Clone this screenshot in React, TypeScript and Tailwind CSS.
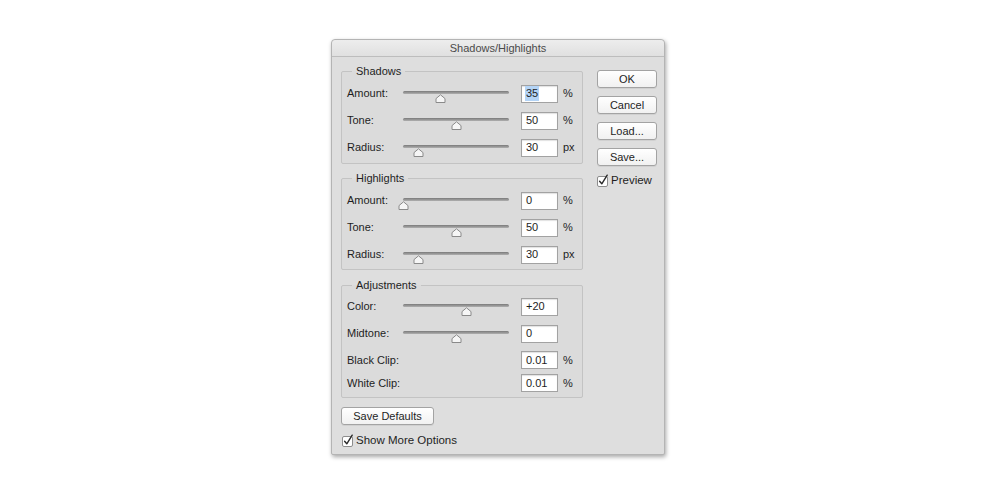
import React from "react";

type RowProps = {
  label: string;
  pos?: number;
  value: string;
  unit?: string;
  selected?: boolean;
  h?: string;
};

function Slider({ pos }: { pos: number }) {
  return (
    <div className="relative w-[106px] h-[18px] shrink-0">
      <div className="absolute left-0 right-0 top-[6px] h-[3px] rounded-full bg-gradient-to-b from-[#7a7a7a] to-[#b0b0b0]" />
      <svg
        className="absolute top-[9px]"
        style={{ left: pos - 5 }}
        width="11"
        height="9"
        viewBox="0 0 11 9"
      >
        <path
          d="M1 8.5V4.6L5.5 0.8L10 4.6V8.5Z"
          fill="#f6f6f6"
          stroke="#8a8a8a"
          strokeWidth="1"
          strokeLinejoin="round"
        />
      </svg>
    </div>
  );
}

function Row({ label, pos, value, unit, selected, h = "h-[27px]" }: RowProps) {
  return (
    <div className={`flex items-center ${h}`}>
      <span className="w-[56px] shrink-0 text-[#1e1e1e]">{label}</span>
      {pos !== undefined ? <Slider pos={pos} /> : <div className="w-[106px] shrink-0" />}
      <div className="ml-[12px] w-[37px] h-[18px] shrink-0 bg-white border border-[#a2a2a2] shadow-[inset_0_1px_1px_rgba(0,0,0,0.12)] flex items-center pl-[3px] text-[#1e1e1e]">
        {selected ? (
          <span className="bg-[#b4d4f6] px-[1px] leading-[15px]">{value}</span>
        ) : (
          <span className="pl-[1px]">{value}</span>
        )}
      </div>
      {unit && <span className="ml-[5px] text-[#1e1e1e]">{unit}</span>}
    </div>
  );
}

function Group({
  title,
  children,
  className = "",
  pt = "pt-[2px]",
  pb = "pb-[2px]",
}: {
  title: string;
  children: React.ReactNode;
  className?: string;
  pt?: string;
  pb?: string;
}) {
  return (
    <fieldset
      className={`border border-[#c3c3c3] rounded-[2px] pl-[5px] bg-[#dbdbdb] ${pt} ${pb} ${className}`}
    >
      <legend className="ml-[5px] px-[4px] leading-[13px] text-[#1e1e1e]">{title}</legend>
      {children}
    </fieldset>
  );
}

function Check() {
  return (
    <svg width="13" height="13" viewBox="0 0 13 13" className="shrink-0">
      <rect x="0.5" y="2.5" width="10" height="10" rx="1.5" fill="#fff" stroke="#8d8d8d" />
      <path
        d="M2.6 7.2L4.8 9.8L10.2 1.2"
        fill="none"
        stroke="#2a2a2a"
        strokeWidth="1.4"
        strokeLinecap="round"
        strokeLinejoin="round"
      />
    </svg>
  );
}

function Btn({ children, w = "w-[60px]" }: { children: React.ReactNode; w?: string }) {
  return (
    <div
      className={`${w} h-[18px] rounded-[3px] border border-[#a3a3a3] bg-gradient-to-b from-[#ffffff] to-[#f1f1f1] shadow-[0_1px_0_rgba(0,0,0,0.06)] flex items-center justify-center text-[#1e1e1e]`}
    >
      {children}
    </div>
  );
}

export default function App() {
  return (
    <div className="w-[1000px] h-[500px] bg-white pl-[331px] pt-[39px] font-['Liberation_Sans',Arial,sans-serif] text-[11px] leading-[13px]">
      <div className="w-[334px] h-[416px] bg-[#dedede] border border-[#b4b4b4] rounded-t-[4px] rounded-b-[2px] shadow-[1px_2px_4px_rgba(0,0,0,0.35)] flex flex-col">
        <div className="h-[17px] shrink-0 rounded-t-[4px] bg-gradient-to-b from-[#ededed] to-[#e0e0e0] border-b border-[#bdbdbd] flex items-center justify-center text-[#4a4a4a]">
          Shadows/Highlights
        </div>
        <div className="flex pl-[9px] pt-[8px]">
          <div className="w-[242px] flex flex-col">
            <Group title="Shadows">
              <Row label="Amount:" pos={37} value="35" unit="%" selected />
              <Row label="Tone:" pos={53} value="50" unit="%" />
              <Row label="Radius:" pos={15} value="30" unit="px" />
            </Group>
            <Group title="Highlights" className="mt-[8px]" pb="pb-[1px]">
              <Row label="Amount:" pos={0} value="0" unit="%" />
              <Row label="Tone:" pos={53} value="50" unit="%" />
              <Row label="Radius:" pos={15} value="30" unit="px" />
            </Group>
            <Group title="Adjustments" className="mt-[9px]" pt="pt-[1px]" pb="pb-[4px]">
              <Row label="Color:" pos={63} value="+20" />
              <Row label="Midtone:" pos={53} value="0" />
              <Row label="Black Clip:" value="0.01" unit="%" h="h-[26px]" />
              <Row label="White Clip:" value="0.01" unit="%" h="h-[20px]" />
            </Group>
            <div className="mt-[9px]">
              <Btn w="w-[93px]">Save Defaults</Btn>
            </div>
            <div className="mt-[9px] flex items-center gap-[1px] pl-[1px] text-[#1e1e1e]">
              <Check />
              <span className="text-[11.5px]">Show More Options</span>
            </div>
          </div>
          <div className="ml-[14px] pt-[5px] flex flex-col gap-[8px]">
            <Btn>OK</Btn>
            <Btn>Cancel</Btn>
            <Btn>Load...</Btn>
            <Btn>Save...</Btn>
            <div className="flex items-center gap-[1px] text-[#1e1e1e]">
              <Check />
              <span className="text-[11.5px]">Preview</span>
            </div>
          </div>
        </div>
      </div>
    </div>
  );
}
